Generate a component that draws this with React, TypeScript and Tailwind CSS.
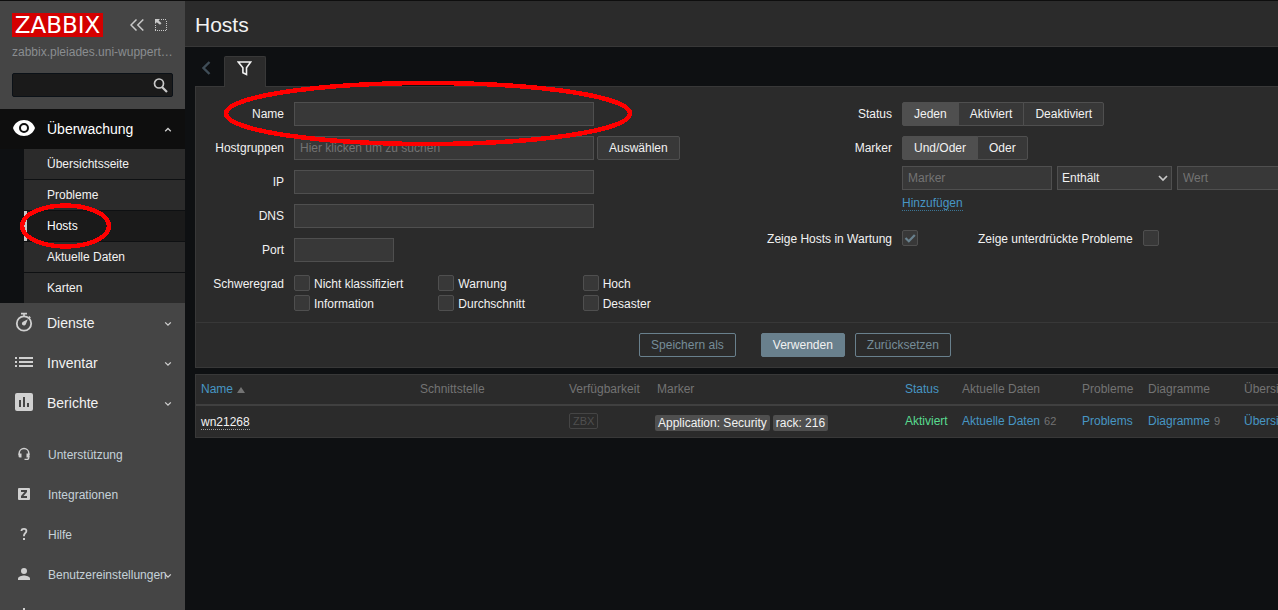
import React, { useState } from "react";

const field =
  "h-6 border border-[#4f4f4f] bg-[#383838] px-[5px] text-xs text-[#f2f2f2] placeholder:text-[#737373] outline-none";
const link = "text-[#4796c4]";

function Chevron({ up = false }: { up?: boolean }) {
  return (
    <svg width="8" height="6" viewBox="0 0 8 6" fill="none" stroke="#d0d0d0" strokeWidth="1.300" className="mt-0.5 shrink-0">
      <path d={up ? "M1.200 4.300 4 1.500l2.800 2.800" : "M1.200 1.400 4 4.200l2.800-2.800"} />
    </svg>
  );
}

function EyeIcon() {
  return (
    <svg width="24" height="24" viewBox="0 0 24 24" fill="#fff">
      <path
        fillRule="evenodd"
        d="M12 3C6.800 3 2.600 6.200 1 11c1.600 4.800 5.800 8 11 8s9.400-3.200 11-8C21.400 6.200 17.200 3 12 3Zm0 13a5 5 0 1 1 0-10 5 5 0 0 1 0 10Zm0-2a3 3 0 1 0 0-6 3 3 0 0 0 0 6Z"
      />
    </svg>
  );
}

function StopwatchIcon() {
  return (
    <svg width="24" height="24" viewBox="0 0 24 24" fill="none" stroke="#d0d0d0">
      <circle cx="12" cy="12.500" r="7.200" strokeWidth="1.800" />
      <path d="M9 2.600h6M12 2v3" strokeWidth="1.600" />
      <path d="M16.800 5.500l1.500 1.500" strokeWidth="1.600" />
      <path d="M15.800 8.200l-2 5a2 2 0 1 1-2.800-2.400Z" fill="#d0d0d0" stroke="none" />
    </svg>
  );
}

function ListIcon() {
  return (
    <svg width="24" height="24" viewBox="0 0 24 24" fill="#d0d0d0">
      <path d="M3 6h2v2H3zM7 6h14v2H7zM3 10h2v2H3zM7 10h14v2H7zM3 14h2v2H3zM7 14h14v2H7z" />
    </svg>
  );
}

function ReportIcon() {
  return (
    <svg width="24" height="24" viewBox="0 0 24 24">
      <rect x="3" y="2" width="18" height="18" rx="2" fill="#d0d0d0" />
      <path d="M7 9h2v7H7zM11 6h2v10h-2zM15 12h2v4h-2z" fill="#454545" />
    </svg>
  );
}

function HeadsetIcon() {
  return (
    <svg width="24" height="24" viewBox="0 0 24 24" fill="none" stroke="#d0d0d0">
      <path d="M7.200 12V10.200a4.700 4.500 0 0 1 9.600 0V12" strokeWidth="1.500" />
      <path d="M16.800 13v1.500q0 1.900-2 1.900H12.500" strokeWidth="1.300" />
      <path d="M6.500 10.500h3v4h-1.500q-1.500 0-1.500-1.500ZM14.500 10.500h3v2.500q0 1.500-1.500 1.500h-1.500Z" fill="#d0d0d0" stroke="none" />
    </svg>
  );
}

function IntegrationIcon() {
  return (
    <svg width="24" height="24" viewBox="0 0 24 24">
      <rect x="6" y="5" width="12" height="12" rx="1" fill="#d0d0d0" />
      <path d="M9 7h6v2L11.500 13H15v2H9v-2L12.500 9H9Z" fill="#454545" />
    </svg>
  );
}

function HelpIcon() {
  return (
    <svg width="24" height="24" viewBox="0 0 24 24" fill="none" stroke="#d0d0d0" strokeWidth="1.800">
      <path d="M9.500 8V7.600Q9.700 5.900 12 5.900q2.400 0 2.400 2 0 1.200-1.300 2.300-1.200 1-1.200 3" />
      <path d="M11 15h2v2h-2z" fill="#d0d0d0" stroke="none" />
    </svg>
  );
}

function UserIcon() {
  return (
    <svg width="24" height="24" viewBox="0 0 24 24" fill="#d0d0d0">
      <circle cx="12" cy="8" r="3" />
      <path d="M6 17v-1.500C6 13.500 10 12.500 12 12.500s6 1 6 3V17Z" />
    </svg>
  );
}

function PowerIcon() {
  return (
    <svg width="24" height="24" viewBox="0 0 24 24" fill="none" stroke="#d0d0d0" strokeWidth="2">
      <path d="M12 5v6M8 8.500a5 5 0 1 0 8 0" />
    </svg>
  );
}

function MenuButton({ icon, label, open = false }: { icon: React.ReactNode; label: string; open?: boolean }) {
  return (
    <button
      type="button"
      aria-expanded={open}
      className={
        open
          ? "flex h-10 w-full items-center bg-[#0e0e0e] pr-[13px] pl-3 text-left text-sm text-white"
          : "flex h-10 w-full items-center pr-[13px] pl-3 text-left text-sm text-[#f2f2f2]"
      }
    >
      {icon}
      <span className="ml-[11px] flex-1">{label}</span>
      <Chevron up={open} />
    </button>
  );
}

function FooterLink({ icon, label, more = false }: { icon: React.ReactNode; label: string; more?: boolean }) {
  return (
    <a href="#" className="flex h-10 items-center pr-[13px] pl-3 text-xs text-[#c5d2d9]">
      {icon}
      <span className="ml-3 w-0 flex-1 whitespace-nowrap">{label}</span>
      {more && <Chevron />}
    </a>
  );
}

function Sidebar() {
  const sub = ["Übersichtsseite", "Probleme", "Hosts", "Aktuelle Daten", "Karten"];
  return (
    <aside className="flex w-[185px] shrink-0 flex-col overflow-hidden bg-[#454545]">
      <div className="px-3 pt-3">
        <div className="flex items-center">
          <a
            href="#"
            className="flex h-6 w-[91px] items-center justify-center bg-[#d40000] font-['DejaVu_Sans',sans-serif] text-[23px] leading-6 text-white"
          >
            ZABBIX
          </a>
          <button type="button" aria-label="Seitenleiste einklappen" className="ml-[27px]">
            <svg width="14" height="12" viewBox="0 0 14 12" fill="none" stroke="#c8c8c8" strokeWidth="1.500">
              <path d="M6.500.5 1 6l5.500 5.500M13.300.5 7.800 6l5.500 5.500" />
            </svg>
          </button>
          <button type="button" aria-label="Seitenleiste ausblenden" className="ml-[11px]">
            <svg width="12" height="12" viewBox="0 0 12 12" fill="none" stroke="#c8c8c8">
              <path d="M6 .5h6M11.500 2v10M0 11.500h12M.5 6v6" strokeDasharray="1 1" />
              <path d="M0 0h5L3.600 1.400 6.500 4.300 5 5.800 1.800 3.200 0 5Z" fill="#c8c8c8" stroke="none" />
            </svg>
          </button>
        </div>
        <div className="mt-[7px] truncate text-xs leading-4 text-[#8a8d90]">zabbix.pleiades.uni-wuppertal.de</div>
        <form role="search" className="mt-[13px] flex h-6 items-center rounded-[2px] border border-[#0b1117] bg-[#1a1a1a] pr-1">
          <input aria-label="Suche" className="h-full min-w-0 flex-1 bg-transparent px-1 text-xs text-white outline-none" />
          <button type="button" aria-label="Suchen">
            <svg width="15" height="16" viewBox="0 0 15 16" fill="none" stroke="#c8c8c8">
              <circle cx="6" cy="6.500" r="4.500" strokeWidth="1.700" />
              <path d="M9 10l5 5" strokeWidth="2.200" />
            </svg>
          </button>
        </form>
      </div>
      <nav className="mt-3">
        <MenuButton icon={<EyeIcon />} label="Überwachung" open />
        <ul className="flex flex-col gap-px bg-[#0e1012] pl-6">
          {sub.map((s) => (
            <li key={s}>
              <a
                href="#"
                className={
                  s === "Hosts"
                    ? "flex h-[30px] items-center border-l-3 border-[#c8c8c8] bg-[#1a1a1a] pl-5 text-xs text-white"
                    : "flex h-[30px] items-center bg-[#2b2b2b] pl-[23px] text-xs text-[#f2f2f2]"
                }
              >
                {s}
              </a>
            </li>
          ))}
        </ul>
        <MenuButton icon={<StopwatchIcon />} label="Dienste" />
        <MenuButton icon={<ListIcon />} label="Inventar" />
        <MenuButton icon={<ReportIcon />} label="Berichte" />
      </nav>
      <nav className="mt-3">
        <FooterLink icon={<HeadsetIcon />} label="Unterstützung" />
        <FooterLink icon={<IntegrationIcon />} label="Integrationen" />
        <FooterLink icon={<HelpIcon />} label="Hilfe" />
        <FooterLink icon={<UserIcon />} label="Benutzereinstellungen" more />
        <a href="#" aria-label="Abmelden" className="flex h-10 items-center pl-3">
          <PowerIcon />
        </a>
      </nav>
    </aside>
  );
}

function Check({ id, label, defaultChecked = false }: { id: string; label?: string; defaultChecked?: boolean }) {
  return (
    <span className="flex h-4 items-center gap-1">
      <span className="grid size-4">
        <input
          id={id}
          type="checkbox"
          defaultChecked={defaultChecked}
          className="peer col-start-1 row-start-1 size-4 appearance-none rounded-[2px] border border-[#4f4f4f] bg-[#383838]"
        />
        <svg
          viewBox="0 0 16 16"
          fill="none"
          stroke="#69808d"
          strokeWidth="2.200"
          className="pointer-events-none invisible col-start-1 row-start-1 size-4 peer-checked:visible"
        >
          <path d="M3.500 8l3.300 3.300L12.800 5" />
        </svg>
      </span>
      {label && (
        <label htmlFor={id} className="pt-0.5">
          {label}
        </label>
      )}
    </span>
  );
}

function Segments({ name, options }: { name: string; options: string[] }) {
  const [value, setValue] = useState(options[0]);
  return (
    <div role="radiogroup" aria-label={name} className="flex">
      {options.map((o) => (
        <label
          key={o}
          className="-ml-px flex h-6 items-center border border-[#4f4f4f] bg-[#383838] px-[11px] first:ml-0 first:rounded-l-[2px] last:rounded-r-[2px] has-checked:bg-[#4f4f4f]"
        >
          <input type="radio" name={name} checked={value === o} onChange={() => setValue(o)} className="sr-only" />
          {o}
        </label>
      ))}
    </div>
  );
}

function TextRow({ id, label, short = false, children }: { id: string; label: string; short?: boolean; children?: React.ReactNode }) {
  return (
    <div className="flex items-center">
      <label htmlFor={id} className="w-[88px] text-right">
        {label}
      </label>
      <input
        id={id}
        placeholder={children ? "Hier klicken um zu suchen" : undefined}
        className={short ? `${field} ml-2.5 w-[100px]` : `${field} ml-2.5 w-[300px]`}
      />
      {children}
    </div>
  );
}

function Filter() {
  const severities = ["Nicht klassifiziert", "Warnung", "Hoch", "Information", "Durchschnitt", "Desaster"];
  return (
    <form className="border border-[#383838] bg-[#2b2b2b]">
      <div className="flex pt-[15px] pb-[11px]">
        <div className="flex w-[560px] shrink-0 flex-col gap-2.5">
          <TextRow id="name" label="Name" />
          <TextRow id="groups" label="Hostgruppen">
            <button type="button" className="ml-[3px] h-6 rounded-[2px] border border-[#4f4f4f] bg-[#383838] px-[11px]">
              Auswählen
            </button>
          </TextRow>
          <TextRow id="ip" label="IP" />
          <TextRow id="dns" label="DNS" />
          <TextRow id="port" label="Port" short />
          <fieldset className="mt-[3px] flex">
            <span className="w-[88px] text-right leading-[18px]">Schweregrad</span>
            <div className="ml-2.5 grid w-[433px] grid-cols-3 gap-y-1">
              {severities.map((s, i) => (
                <Check key={s} id={"severity" + i} label={s} />
              ))}
            </div>
          </fieldset>
        </div>
        <div className="flex flex-1 flex-col gap-2.5">
          <div className="flex items-center gap-2.5">
            <span className="w-[136px] text-right">Status</span>
            <Segments name="Status" options={["Jeden", "Aktiviert", "Deaktiviert"]} />
          </div>
          <div className="flex gap-2.5">
            <span className="w-[136px] text-right leading-6">Marker</span>
            <div className="flex flex-col items-start gap-1.5">
              <Segments name="Auswertung" options={["Und/Oder", "Oder"]} />
              <div className="flex gap-[5px]">
                <input aria-label="Marker" placeholder="Marker" className={`${field} w-[150px]`} />
                <div className="grid w-[115px]">
                  <select aria-label="Operator" className={`${field} col-start-1 row-start-1 appearance-none pl-1`}>
                    <option>Enthält</option>
                    <option>Gleich</option>
                  </select>
                  <svg
                    width="10"
                    height="7"
                    viewBox="0 0 10 7"
                    fill="none"
                    stroke="#c8c8c8"
                    strokeWidth="1.700"
                    className="pointer-events-none col-start-1 row-start-1 mr-1 self-center justify-self-end"
                  >
                    <path d="M1 1l4 4 4-4" />
                  </svg>
                </div>
                <input aria-label="Wert" placeholder="Wert" className={`${field} w-[150px]`} />
              </div>
              <a href="#" className={`${link} border-b border-dotted border-[#3c7595] leading-[14px]`}>
                Hinzufügen
              </a>
            </div>
          </div>
          <div className="mt-2 flex items-center gap-2.5">
            <label htmlFor="maintenance" className="w-[136px] pt-0.5 text-right">
              Zeige Hosts in Wartung
            </label>
            <Check id="maintenance" defaultChecked />
            <label htmlFor="suppressed" className="ml-[50px] pt-0.5">
              Zeige unterdrückte Probleme
            </label>
            <Check id="suppressed" />
          </div>
        </div>
      </div>
      <div className="flex justify-center border-t border-[#383838] py-2.5">
        <button type="button" className="h-6 rounded-[2px] border border-[#69808d] px-[11px] text-[#768d99]">
          Speichern als
        </button>
        <button type="button" className="ml-[25px] h-6 rounded-[2px] border border-[#69808d] bg-[#69808d] px-[11px] text-[#f2f2f2]">
          Verwenden
        </button>
        <button type="button" className="ml-2.5 h-6 rounded-[2px] border border-[#69808d] px-[11px] text-[#768d99]">
          Zurücksetzen
        </button>
      </div>
    </form>
  );
}

function HostTable() {
  const tag = "rounded-[2px] bg-[#4f4f4f] px-[3px] leading-4 text-[#f2f2f2]";
  return (
    <table className="mt-1.5 w-full table-fixed border-separate border-spacing-0 border border-[#383838] bg-[#2b2b2b] text-left whitespace-nowrap">
      <colgroup>
        <col className="w-[219px]" />
        <col className="w-[149px]" />
        <col className="w-[88px]" />
        <col className="w-[248px]" />
        <col className="w-[57px]" />
        <col className="w-[120px]" />
        <col className="w-[66px]" />
        <col className="w-[96px]" />
        <col />
      </colgroup>
      <thead className="text-[#737373]">
        <tr className="h-[31px] *:border-b-2 *:border-[#404040] *:p-0 *:pb-0.5 *:pl-[5px] *:font-normal">
          <th>
            <a href="#" className={`${link} flex items-center gap-1`}>
              Name
              <svg width="8" height="6" viewBox="0 0 8 6" fill="#737373" className="mt-0.5">
                <path d="M4 0l4 6H0Z" />
              </svg>
            </a>
          </th>
          <th>Schnittstelle</th>
          <th>Verfügbarkeit</th>
          <th>Marker</th>
          <th>
            <a href="#" className={link}>Status</a>
          </th>
          <th>Aktuelle Daten</th>
          <th>Probleme</th>
          <th>Diagramme</th>
          <th>Übersichtsseiten</th>
        </tr>
      </thead>
      <tbody>
        <tr className="h-[31px] *:p-0 *:pb-0.5 *:pl-[5px]">
          <td>
            <a href="#" className="mt-1 inline-block border-b border-dotted border-[#a0a0a0] leading-[14px] text-[#f2f2f2]">
              wn21268
            </a>
          </td>
          <td />
          <td>
            <span className="inline-block rounded-[2px] border border-[#454545] px-[3px] text-[11px] leading-[14px] text-[#4f4f4f]">ZBX</span>
          </td>
          <td>
            <div className="mt-1 -ml-0.5 flex gap-[3px]">
              <span className={tag}>Application: Security</span>
              <span className={tag}>rack: 216</span>
            </div>
          </td>
          <td>
            <a href="#" className="text-[#59db8f]">Aktiviert</a>
          </td>
          <td>
            <a href="#" className={link}>Aktuelle Daten</a>
            <span className="ml-1 text-[11px] text-[#737373]">62</span>
          </td>
          <td>
            <a href="#" className={link}>Problems</a>
          </td>
          <td>
            <a href="#" className={link}>Diagramme</a>
            <span className="ml-1 text-[11px] text-[#737373]">9</span>
          </td>
          <td>
            <a href="#" className={link}>Übersichtsseiten</a>
          </td>
        </tr>
      </tbody>
    </table>
  );
}

export default function App() {
  return (
    <div className="relative flex h-screen overflow-hidden border-t border-[#0e0e0e] bg-[#0e1012] font-['Liberation_Sans',Arial,sans-serif] text-xs text-[#f2f2f2]">
      <Sidebar />
      <main className="min-w-0 flex-1 overflow-hidden">
        <header className="flex h-[46px] items-center border-b border-[#383838] bg-[#2b2b2b] px-2.5 pt-0.5">
          <h1 className="text-[21px]">Hosts</h1>
        </header>
        <div className="min-w-[1220px] px-2.5 pt-[9px]">
          <div className="flex">
            <button type="button" aria-label="Zurück" className="flex h-[30px] w-[29px] items-center pl-[7px]">
              <svg width="9" height="14" viewBox="0 0 9 14" fill="none" stroke="#3f4d57" strokeWidth="2.400" className="-mt-1.5">
                <path d="M7.500 1 1.500 7l6 6" />
              </svg>
            </button>
            <button
              type="button"
              aria-label="Filter"
              className="relative -mb-px flex h-[31px] w-[42px] justify-center rounded-t-[2px] border border-b-0 border-[#383838] bg-[#2b2b2b] pt-1 pr-px"
            >
              <svg width="15" height="15" viewBox="0 0 15 15" fill="none" stroke="#f2f2f2" strokeWidth="1.600">
                <path d="M1.300 1h12.400L9.500 6.800v6.700l-3.600-1.800V6.800Z" />
              </svg>
            </button>
          </div>
          <Filter />
          <HostTable />
        </div>
      </main>
      <svg
        className="pointer-events-none absolute -top-px left-0"
        width="640"
        height="260"
        fill="none"
        stroke="#ff0000"
        shapeRendering="crispEdges"
        aria-hidden="true"
      >
        <ellipse cx="428" cy="113.500" rx="202" ry="30.500" strokeWidth="4.500" />
        <ellipse cx="65.500" cy="226" rx="43.500" ry="20.500" strokeWidth="4.500" />
      </svg>
    </div>
  );
}
